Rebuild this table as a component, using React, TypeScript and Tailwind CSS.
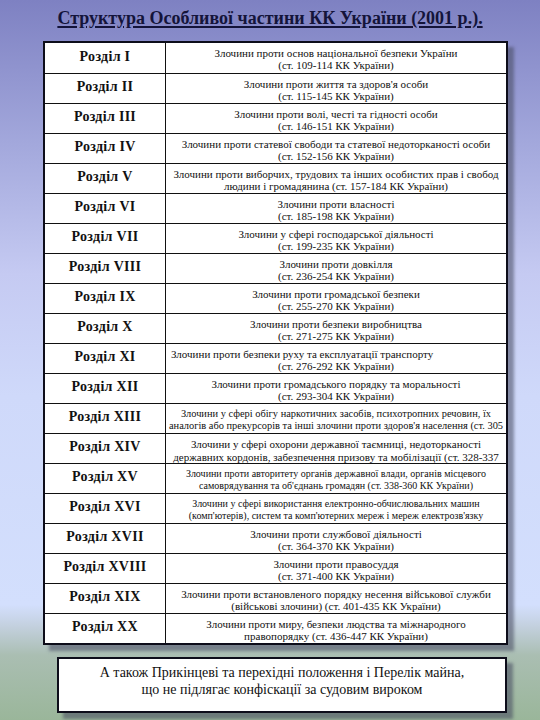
import React from "react";

type Row = {
  label: string;
  lines: [string, string];
  size?: "xs" | "sm" | "lg";
  // per-line alignment: "c" centred, "l" left-aligned
  align?: ["c" | "l", "c" | "l"];
};

const rows: Row[] = [
  { label: "Розділ I", lines: ["Злочини проти основ національної безпеки України", "(ст. 109-114 КК України)"] },
  { label: "Розділ II", lines: ["Злочини проти життя та здоров'я особи", "(ст. 115-145 КК України)"] },
  { label: "Розділ III", lines: ["Злочини проти волі, честі та гідності особи", "(ст. 146-151 КК України)"] },
  { label: "Розділ IV", lines: ["Злочини проти статевої свободи та статевої недоторканості особи", "(ст. 152-156 КК України)"] },
  { label: "Розділ V", lines: ["Злочини проти виборчих, трудових та інших особистих прав і свобод", "людини і громадянина (ст. 157-184 КК України)"] },
  { label: "Розділ VI", lines: ["Злочини проти власності", "(ст. 185-198 КК України)"] },
  { label: "Розділ VII", lines: ["Злочини у сфері господарської діяльності", "(ст. 199-235 КК України)"] },
  { label: "Розділ VIII", lines: ["Злочини проти довкілля", "(ст. 236-254 КК України)"] },
  { label: "Розділ IX", lines: ["Злочини проти громадської безпеки", "(ст. 255-270 КК України)"] },
  { label: "Розділ X", lines: ["Злочини проти безпеки виробництва", "(ст. 271-275 КК України)"] },
  { label: "Розділ XI", lines: ["Злочини проти безпеки руху та експлуатації транспорту", "(ст. 276-292 КК України)"], align: ["l", "c"] },
  { label: "Розділ XII", lines: ["Злочини проти громадського порядку та моральності", "(ст. 293-304 КК України)"] },
  {
    label: "Розділ XIII",
    lines: [
      "Злочини у сфері обігу наркотичних засобів, психотропних речовин, їх",
      "аналогів або прекурсорів та інші злочини проти здоров'я населення (ст. 305",
    ],
    size: "sm",
  },
  {
    label: "Розділ XIV",
    lines: [
      "Злочини у сфері охорони державної таємниці, недоторканості",
      "державних кордонів, забезпечення призову та мобілізації (ст. 328-337",
    ],
    size: "lg",
  },
  {
    label: "Розділ XV",
    lines: [
      "Злочини проти авторитету органів державної влади, органів місцевого",
      "самоврядування та об'єднань громадян (ст. 338-360 КК України)",
    ],
    size: "xs",
  },
  {
    label: "Розділ XVI",
    lines: [
      "Злочини у сфері використання електронно-обчислювальних машин",
      "(комп'ютерів), систем та комп'ютерних мереж і мереж електрозв'язку",
    ],
    size: "xs",
  },
  { label: "Розділ XVII", lines: ["Злочини проти службової діяльності", "(ст. 364-370 КК України)"] },
  { label: "Розділ XVIII", lines: ["Злочини проти правосуддя", "(ст. 371-400 КК України)"] },
  { label: "Розділ XIX", lines: ["Злочини проти встановленого порядку несення військової служби", "(військові злочини) (ст. 401-435 КК України)"] },
  { label: "Розділ XX", lines: ["Злочини проти миру, безпеки людства та міжнародного", "правопорядку (ст. 436-447 КК України)"] },
];

function sizeClass(size: Row["size"]) {
  switch (size) {
    case "xs":
      return "text-[10px] leading-[12px]";
    case "sm":
      return "text-[10.4px] leading-[12px]";
    case "lg":
      return "text-[11px] leading-[13px]";
    default:
      return "text-[11px] leading-[12px]";
  }
}

const serif = "[font-family:'Liberation_Serif','Times_New_Roman',serif]";

export default function App() {
  return (
    <div className={`h-[720px] w-[540px] overflow-hidden bg-[linear-gradient(180deg,#7e81c2_0%,#a3a8dc_20%,#c5caf2_38%,#cfd9fa_55%,#d3dffd_84%,#c3d0de_87%,#aabeb2_91%,#9ab69a_100%)] text-[#111] ${serif}`}>
      {/* title */}
      <h1 className="pt-[6px] text-center text-[18px] font-bold leading-[24px] text-[#14143a] underline decoration-[1.5px] underline-offset-[2px]">
        Структура Особливої частини КК України (2001 р.).
      </h1>

      {/* table */}
      <div className="ml-[43px] mt-[11px] w-[465px] border-2 border-[#0d0d1a] bg-white shadow-[6px_6px_3px_rgba(70,72,95,0.55)]">
        {rows.map((row, i) => (
          <div key={row.label} className={`flex h-[30px] ${i > 0 ? "border-t border-[#111]" : ""}`}>
            <div className="flex w-[121px] shrink-0 items-center justify-center border-r border-[#111] pb-[4px] text-[14px] font-bold tracking-[0.3px]">
              {row.label}
            </div>
            <div className={`min-w-0 flex-1 pt-[4px] ${sizeClass(row.size)}`}>
              {row.lines.map((line, j) => (
                <div
                  key={j}
                  className={`whitespace-nowrap ${
                    (row.align?.[j] ?? "c") === "l" ? "pl-[5px] text-left" : "text-center"
                  }`}
                >
                  {line}
                </div>
              ))}
            </div>
          </div>
        ))}
      </div>

      {/* footer note */}
      <div className="ml-[57px] mt-[12px] h-[56px] w-[450px] border-2 border-[#0d0d1a] bg-white pt-[5px] text-center text-[14px] leading-[17px] shadow-[6px_6px_3px_rgba(70,72,95,0.55)]">
        <p>А також Прикінцеві та перехідні положення і Перелік майна,</p>
        <p>що не підлягає конфіскації за судовим вироком</p>
      </div>
    </div>
  );
}
